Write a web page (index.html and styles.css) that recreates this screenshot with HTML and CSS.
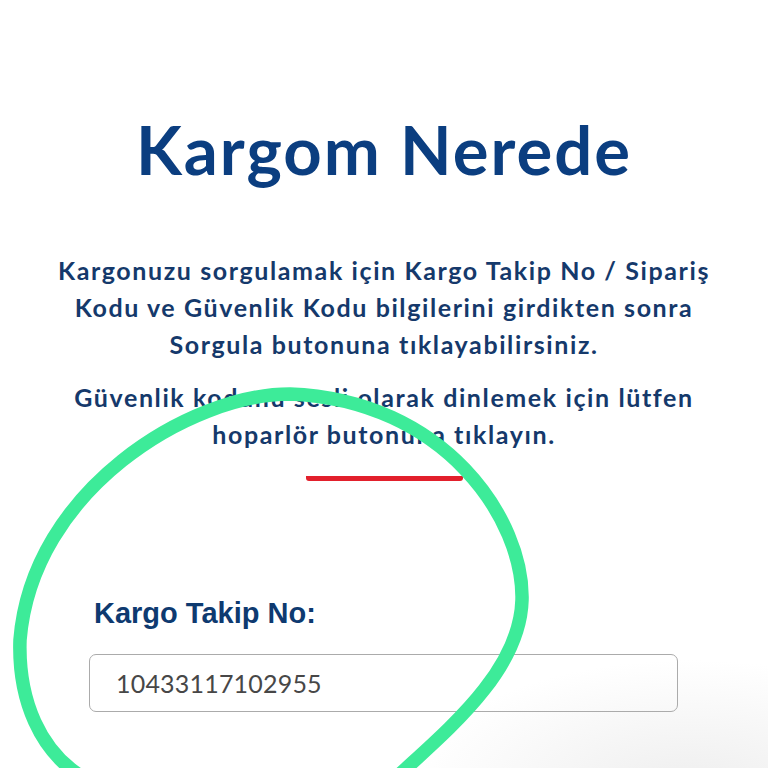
FILE: index.html
```html
<!DOCTYPE html>
<html lang="tr">
<head>
<meta charset="utf-8">
<title>Kargom Nerede</title>
<link rel="stylesheet" href="styles.css">
</head>
<body>
<main class="page">
  <h1 class="title">Kargom Nerede</h1>
  <p class="intro">Kargonuzu sorgulamak için Kargo Takip No / Sipariş<br>Kodu ve Güvenlik Kodu bilgilerini girdikten sonra<br>Sorgula butonuna tıklayabilirsiniz.</p>
  <p class="intro intro-second">Güvenlik kodunu sesli olarak dinlemek için lütfen<br>hoparlör butonuna tıklayın.</p>
  <div class="divider"></div>

  <form class="track-form">
    <label class="field-label" for="tracking">Kargo Takip No:</label>
    <input class="field-input" id="tracking" type="text" value="10433117102955">
  </form>
</main>

<svg class="scribble" viewBox="0 0 768 768" aria-hidden="true">
  <path d="M400 774 C450 728 520 670 522 600 C524 520 445 400 290 394 C190 394 32 490 20 640 C18 700 40 752 84 778"/>
</svg>
</body>
</html>
```

FILE: styles.css
```css
* {
  box-sizing: border-box;
}

html, body {
  margin: 0;
  height: 100%;
}

body {
  position: relative;
  overflow: hidden;
  background:
    radial-gradient(ellipse 280px 130px at 690px 790px, #eeeeee 0%, rgba(255,255,255,0) 100%),
    #ffffff;
  font-family: Lato, "Noto Sans", sans-serif;
}

.page {
  padding-top: 107px;
  display: flex;
  flex-direction: column;
  align-items: stretch;
}

.title {
  margin: 0;
  text-align: center;
  font-size: 67px;
  line-height: 84px;
  font-weight: 700;
  letter-spacing: 2px;
  color: #0b3e80;
}

.intro {
  margin: 61px 0 0;
  text-align: center;
  font-size: 25px;
  line-height: 37px;
  font-weight: 700;
  letter-spacing: 1.6px;
  color: #15396b;
}

.intro-second {
  margin-top: 16px;
}

.divider {
  width: 157px;
  height: 5px;
  margin: 23px auto 0;
  background: #e2202c;
  border-radius: 0 0 3px 3px;
}

.track-form {
  display: flex;
  flex-direction: column;
  padding: 115px 90px 0 89px;
}

.field-label {
  font-family: "Liberation Sans", Arial, sans-serif;
  font-weight: 700;
  font-size: 29px;
  line-height: 34px;
  color: #0e3a70;
  padding-left: 5px;
}

.field-input {
  margin-top: 24px;
  height: 58px;
  width: 100%;
  border: 1.5px solid #ababab;
  border-radius: 7px;
  padding: 0 26px;
  font-family: Lato, sans-serif;
  font-size: 25px;
  letter-spacing: 0.2px;
  color: #474747;
  background: transparent;
  outline: none;
}

.scribble {
  position: absolute;
  left: 0;
  top: 0;
  width: 768px;
  height: 768px;
  pointer-events: none;
}

.scribble path {
  fill: none;
  stroke: #3deb99;
  stroke-width: 13.5;
  stroke-linecap: round;
}
```
